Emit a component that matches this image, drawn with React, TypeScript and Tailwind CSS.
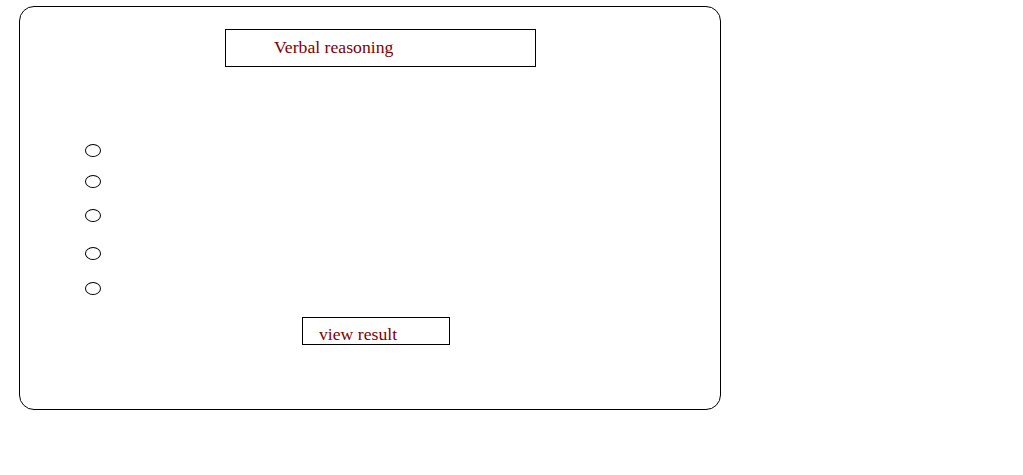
import React from "react";

export default function App() {
  const radioMargins = ["mt-[77px]", "mt-[18px]", "mt-[21px]", "mt-[25px]", "mt-[22px]"];
  return (
    <div className="w-[1023px] h-[475px] bg-white" style={{ fontFamily: '"Liberation Serif", serif' }}>
      <div className="ml-[19px] pt-[6px]">
        <div className="w-[702px] h-[404px] border border-black rounded-[15px] flex flex-col">
          <div className="ml-[205px] mt-[22px] w-[311px] h-[38px] border border-black flex items-center pl-[48px]">
            <span className="text-[17.7px] leading-none text-[#800000] -mt-[1px]">Verbal reasoning</span>
          </div>
          <div className="flex flex-col ml-[65px]">
            {radioMargins.map((m, i) => (
              <div key={i} className={`${m} w-[16px] h-[13px] border border-black rounded-[50%]`} />
            ))}
          </div>
          <div className="ml-[282px] mt-[22px] w-[148px] h-[28px] border border-black pl-[16px] pt-[8px]">
            <span className="block text-[17.7px] leading-none text-[#800000]">view result</span>
          </div>
        </div>
      </div>
    </div>
  );
}
